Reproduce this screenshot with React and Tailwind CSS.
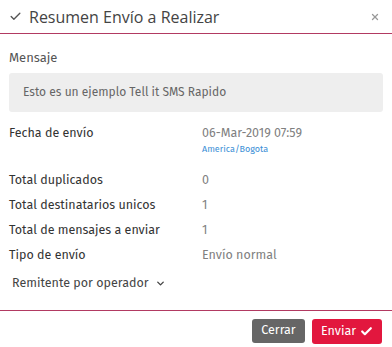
import { Check, ChevronDown, X } from "lucide-react";

const rows = [
  { label: "Total duplicados", value: "0" },
  { label: "Total destinatarios unicos", value: "1" },
  { label: "Total de mensajes a enviar", value: "1" },
  { label: "Tipo de envío", value: "Envío normal" },
];

export default function App() {
  return (
    <div className="h-[347px] w-[392px] bg-white font-['Open_Sans',sans-serif]">
      <header className="flex h-[34px] items-center justify-between border-b border-[#b23a62] pl-[9px] pr-[12px]">
        <div className="flex items-center gap-[7px]">
          <Check size={13} strokeWidth={2.5} className="text-[#555]" />
          <h3 className="text-[16px] leading-none text-[#444]">Resumen Envío a Realizar</h3>
        </div>
        <X size={10} strokeWidth={3} className="text-[#999]" />
      </header>

      <div className="px-[9px] pt-[14px] font-['Fira_Sans','Roboto',sans-serif]">
        <p className="text-[13px] text-[#555]">Mensaje</p>
        <div className="mt-[5px] flex h-[39px] items-center rounded-[3px] bg-[#eeeeee] px-[14px] text-[12px] text-[#666]">
          Esto es un ejemplo Tell it SMS Rapido
        </div>

        <div className="mt-[12px] grid grid-cols-[193px_1fr]">
          <span className="text-[12.5px] text-[#333]">Fecha de envío</span>
          <div className="flex flex-col">
            <span className="text-[12.5px] text-[#808080]">06-Mar-2019 07:59</span>
            <span className="mt-[1px] text-[9px] text-[#3b8fd6]">America/Bogota</span>
          </div>
        </div>

        <div className="mt-[14px] flex flex-col gap-[7px]">
          {rows.map((r) => (
            <div key={r.label} className="grid h-[18px] grid-cols-[193px_1fr] items-center">
              <span className="text-[12.5px] text-[#333]">{r.label}</span>
              <span className="text-[12.5px] text-[#808080]">{r.value}</span>
            </div>
          ))}
        </div>

        <button className="mt-[10px] flex items-center gap-[6px] pl-[3px] text-[12.5px] text-[#444]">
          Remitente por operador
          <ChevronDown size={11} strokeWidth={3} />
        </button>
      </div>

      <footer className="mt-[17px] flex justify-end gap-[7px] border-t border-[#b23a62] pr-[10px] pt-[8px] font-['Fira_Sans','Roboto',sans-serif]">
        <button className="h-[24px] w-[53px] rounded-[3px] bg-[#666] text-[12.5px] text-white">Cerrar</button>
        <button className="flex h-[25px] w-[70px] items-center justify-center gap-[4px] rounded-[3px] bg-[#e2173e] text-[12.5px] text-white">
          Enviar
          <Check size={13} strokeWidth={4} />
        </button>
      </footer>
    </div>
  );
}
